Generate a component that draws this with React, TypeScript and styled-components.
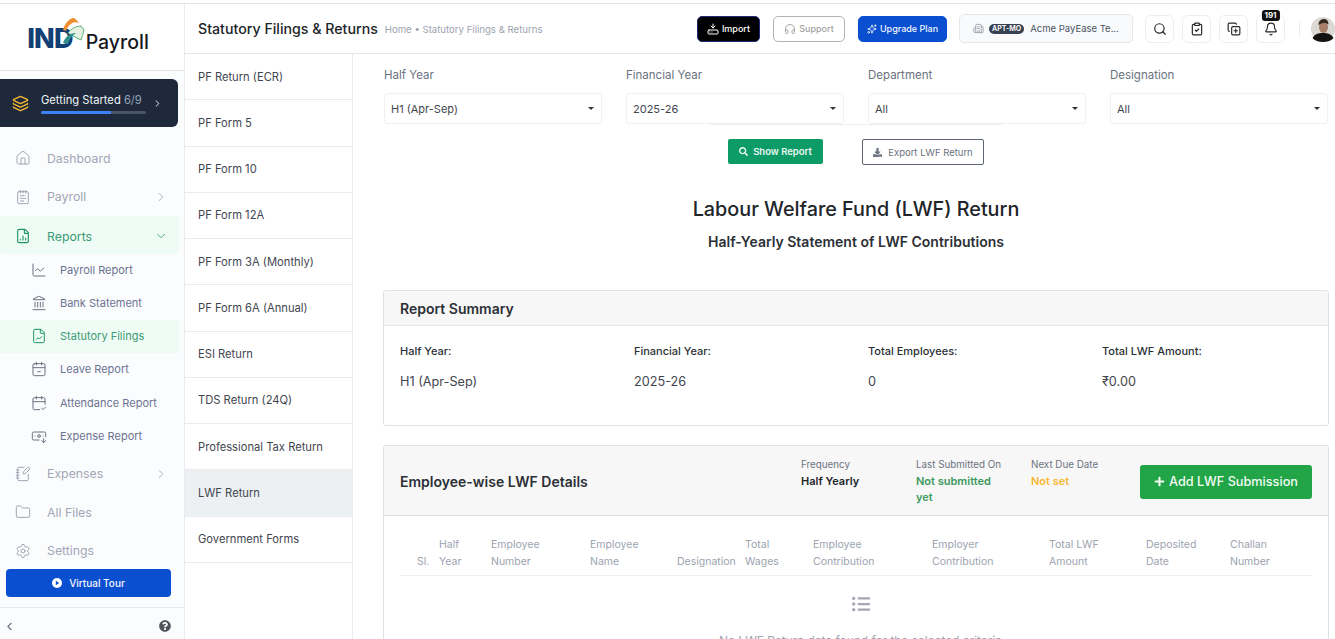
import styled, { createGlobalStyle } from 'styled-components';
import {
  BanknoteArrowDown,
  Bell,
  Building2,
  CalendarCheck2,
  CalendarMinus2,
  ChartLine,
  ChevronDown,
  ChevronLeft,
  ChevronRight,
  ClipboardCheck,
  CopyPlus,
  FileChartColumn,
  FileChartLine,
  Folder,
  Headphones,
  House,
  Landmark,
  Layers,
  NotebookPen,
  NotepadText,
  Search,
  Settings,
  Sparkles,
  HardDriveDownload,
} from 'lucide-react';
import { FaDownload, FaListUl, FaPlus, FaQuestionCircle, FaSearch } from 'react-icons/fa';

const GlobalStyle = createGlobalStyle`
  html, body {
    margin: 0;
    height: 100%;
    overflow: hidden;
    background: #fff;
    font-family: Inter, "Liberation Sans", sans-serif;
    color: #212529;
  }
  * { box-sizing: border-box; }
`;

const Page = styled.div`
  height: 100vh;
  padding-top: 3px;
  display: flex;
  flex-direction: column;
  overflow: hidden;
`;

const Shell = styled.div`
  flex: 1;
  min-height: 0;
  display: flex;
  border-top: 1px solid #e3e5e8;
`;

const Sidebar = styled.aside`
  width: 185px;
  flex: none;
  display: flex;
  flex-direction: column;
  background: #fbfcfe;
  border-right: 1px solid #e9ebee;
`;

const LogoBox = styled.div`
  height: 67px;
  flex: none;
  display: flex;
  align-items: center;
  justify-content: center;
  padding: 2px 8px 0 0;
  background: #fff;
  border-bottom: 1px solid #e5e7ea;
`;

const LogoMark = styled.span`
  font-size: 27px;
  line-height: 1;
  font-weight: 800;
  letter-spacing: -0.8px;
  color: #123f74;
`;

const LogoSwoosh = styled.svg`
  width: 26px;
  height: 28px;
  margin: -14px 0 0 -13px;
`;

const LogoWord = styled.span`
  font-size: 19.5px;
  line-height: 1;
  font-weight: 500;
  color: #15181d;
  margin: 9px 0 0 0;
`;

const StartedCard = styled.div`
  height: 48px;
  width: 178px;
  margin-top: 8px;
  flex: none;
  display: flex;
  align-items: center;
  padding: 0 15px 0 12px;
  border-radius: 0 6px 6px 0;
  background: #1e293b;
  color: #f1f5f9;
`;

const StartedBody = styled.div`
  width: 105px;
  margin: 0 auto 0 12px;
`;

const StartedText = styled.div`
  font-size: 11.2px;
  line-height: 15px;
  white-space: nowrap;
  span { color: #94a3b8; }
`;

const ProgressTrack = styled.div`
  height: 3px;
  margin-top: 3px;
  border-radius: 2px;
  background: #475569;
  overflow: hidden;
`;

const ProgressFill = styled.div`
  height: 100%;
  width: 67%;
  background: #3b82f6;
`;

const Nav = styled.nav`
  display: flex;
  flex-direction: column;
  margin-top: 12px;
  width: 179px;
`;

const NavItem = styled.div<{ $active?: boolean }>`
  height: 38.4px;
  display: flex;
  align-items: center;
  padding: ${(p) => (p.$active ? '3px' : '0')} 11px 0 15px;
  font-size: 12.3px;
  color: ${(p) => (p.$active ? '#3c9a72' : '#a2a7b5')};
  background: ${(p) => (p.$active ? '#effcf6' : 'transparent')};
  border-radius: 4px;
  svg { flex: none; }
  > svg:last-child:not(:first-child) { margin-left: auto; }
`;

const NavLabel = styled.span`
  margin-left: 16px;
`;

const SubNav = styled.div`
  display: flex;
  flex-direction: column;
  margin: -1px 0 2.5px;
`;

const SubItem = styled.div<{ $active?: boolean }>`
  height: 33.2px;
  display: flex;
  align-items: center;
  padding-left: 31px;
  font-size: 11px;
  color: ${(p) => (p.$active ? '#3c9a72' : '#6b7390')};
  background: ${(p) => (p.$active ? '#effcf6' : 'transparent')};
  svg { flex: none; color: ${(p) => (p.$active ? '#1f9266' : '#6b7280')}; }
`;

const SubLabel = styled.span`
  margin-left: 13px;
`;

const TourButton = styled.div`
  width: 165px;
  height: 28px;
  flex: none;
  margin: -1px 0 0 6px;
  display: flex;
  align-items: center;
  justify-content: center;
  gap: 7px;
  border-radius: 4px;
  background: #0b4fd1;
  color: #f4f7ff;
  font-size: 10px;
  font-weight: 500;
`;

const TourIcon = styled.svg`
  width: 10px;
  height: 10px;
`;

const SideFooter = styled.div`
  margin-top: 10px;
  height: 32px;
  flex: none;
  display: flex;
  align-items: center;
  justify-content: space-between;
  padding: 6px 13px 0 3px;
  border-top: 1px solid #e5e7ea;
  color: #6b7280;
`;

const Main = styled.div`
  flex: 1;
  min-width: 0;
  display: flex;
  flex-direction: column;
`;

const Header = styled.header`
  height: 50px;
  flex: none;
  display: flex;
  align-items: center;
  padding: 0 0 0 13px;
  border-bottom: 1px solid #e5e7ea;
`;

const PageTitle = styled.h1`
  margin: 0;
  font-size: 14.2px;
  font-weight: 500;
  color: #212529;
  white-space: nowrap;
`;

const Crumbs = styled.div`
  margin: 2px auto 0 7px;
  font-size: 9.6px;
  color: #9ca3af;
  white-space: nowrap;
`;

const HeaderButton = styled.div<{ $bg: string; $fg: string; $line: string; $w: number; $gap: number }>`
  width: ${(p) => p.$w}px;
  height: 26px;
  margin-right: ${(p) => p.$gap}px;
  flex: none;
  display: flex;
  align-items: center;
  justify-content: center;
  gap: 3px;
  border-radius: 5px;
  font-size: 9px;
  font-weight: 500;
  background: ${(p) => p.$bg};
  color: ${(p) => p.$fg};
  border: 1px solid ${(p) => p.$line};
`;

const CompanyBox = styled.div`
  width: 174px;
  height: 29px;
  margin-right: 12px;
  flex: none;
  display: flex;
  align-items: center;
  padding-left: 13px;
  gap: 4px;
  border: 1px solid #e5e7eb;
  border-radius: 5px;
  background: #f9fafb;
  font-size: 9.5px;
  color: #4b5563;
  white-space: nowrap;
`;

const CompanyTag = styled.span`
  padding: 0 3px;
  margin: 0 2px 0 1px;
  border-radius: 6px;
  background: #374151;
  color: #f3f4f6;
  font-size: 7px;
  line-height: 10px;
  font-weight: 700;
`;

const IconButton = styled.div`
  position: relative;
  width: 29px;
  height: 28px;
  margin-right: 8px;
  flex: none;
  display: flex;
  align-items: center;
  justify-content: center;
  border: 1px solid #eceef0;
  border-radius: 6px;
  color: #27272a;
`;

const CountBadge = styled.span`
  position: absolute;
  top: -6px;
  left: 50%;
  transform: translateX(-50%);
  padding: 0 3px;
  border-radius: 3px;
  background: #111;
  color: #fff;
  font-size: 8px;
  line-height: 11px;
  font-weight: 700;
`;

const Divider = styled.span`
  width: 1px;
  height: 16px;
  background: #eceef0;
  margin: 0 11px 0 6px;
  flex: none;
`;

const Avatar = styled.svg`
  width: 24px;
  height: 26px;
  flex: none;
`;

const Columns = styled.div`
  flex: 1;
  min-height: 0;
  display: flex;
`;

const ReportList = styled.div`
  width: 168px;
  flex: none;
  align-self: stretch;
  background: #fff;
  border-right: 1px solid #e9ebee;
`;

const ReportListItem = styled.div<{ $active?: boolean }>`
  height: 46.25px;
  display: flex;
  align-items: center;
  padding-left: 13px;
  font-size: 11.2px;
  color: #3f4650;
  background: ${(p) => (p.$active ? '#edf0f3' : '#fff')};
  border-bottom: 1px solid #e9ebee;
`;

const Content = styled.main`
  flex: 1;
  min-width: 0;
  padding: 13px 6px 0 30px;
`;

const Filters = styled.div`
  position: relative;
  display: grid;
  grid-template-columns: repeat(4, 218px);
  gap: 24px;
  margin-left: 1px;

  &::after {
    content: '';
    position: absolute;
    left: 325px;
    bottom: -1px;
    width: 294px;
    height: 1px;
    background: #eceef0;
  }
`;

const Field = styled.div`
  display: flex;
  flex-direction: column;
`;

const FieldLabel = styled.label`
  font-size: 11.5px;
  line-height: 16px;
  color: #6b7280;
  margin-bottom: 10px;
`;

const FieldSelect = styled.div`
  height: 31px;
  display: flex;
  align-items: center;
  justify-content: space-between;
  padding: 0 7px 0 6px;
  font-size: 11px;
  color: #3f4650;
  background: #fff;
  border: 1px solid #eff1f3;
  border-radius: 3px;
`;

const Caret = styled.span`
  width: 0;
  height: 0;
  border-left: 3px solid transparent;
  border-right: 3px solid transparent;
  border-top: 3px solid #333;
`;

const Actions = styled.div`
  display: flex;
  align-items: flex-start;
  margin: 15px 0 0 345px;
  gap: 39px;
`;

const ShowButton = styled.div`
  width: 95px;
  height: 25px;
  display: flex;
  align-items: center;
  justify-content: center;
  gap: 5px;
  border-radius: 2px;
  background: #0d9b68;
  color: #eafaf3;
  font-size: 9.5px;
  font-weight: 600;
`;

const ExportButton = styled.div`
  width: 122px;
  height: 26px;
  display: flex;
  align-items: center;
  justify-content: center;
  gap: 6px;
  border: 1px solid #5c6470;
  border-radius: 2px;
  color: #6b7280;
  font-size: 9.5px;
`;

const ReportHeading = styled.div`
  margin-top: 31px;
  width: 946px;
  text-align: center;
`;

const ReportTitle = styled.h2`
  margin: 0;
  font-size: 19.8px;
  line-height: 26px;
  font-weight: 500;
  color: #212529;
`;

const ReportSubtitle = styled.h3`
  margin: 11px 0 0;
  font-size: 14px;
  line-height: 18px;
  font-weight: 600;
  color: #2b3036;
`;

const Card = styled.section<{ $top: number; $h?: number }>`
  width: 946px;
  margin-top: ${(p) => p.$top}px;
  ${(p) => (p.$h ? `height: ${p.$h}px;` : '')}
  border: 1px solid #dfe1e4;
  border-radius: 3px;
  background: #fff;
`;

const CardHead = styled.div`
  height: 35px;
  display: flex;
  align-items: center;
  padding-left: 16px;
  background: #f7f7f7;
  border-bottom: 1px solid #e4e5e7;
  font-size: 14px;
  font-weight: 600;
  color: #2b3036;
`;

const SummaryGrid = styled.div`
  display: grid;
  grid-template-columns: repeat(4, 234px);
  padding: 17px 0 0 16px;
`;

const SummaryLabel = styled.div`
  font-size: 11px;
  line-height: 16px;
  font-weight: 500;
  color: #2b3036;
`;

const SummaryValue = styled.div`
  margin-top: 15px;
  font-size: 12.7px;
  line-height: 16px;
  color: #3f4650;
`;

const DetailHead = styled.div`
  height: 70px;
  display: flex;
  padding-left: 16px;
  background: #f7f7f7;
  border-bottom: 1px solid #dfe1e4;
`;

const DetailTitle = styled.div`
  width: 401px;
  align-self: center;
  padding-top: 2px;
  font-size: 14px;
  font-weight: 600;
  color: #2b3036;
`;

const Meta = styled.div<{ $w: number }>`
  width: ${(p) => p.$w}px;
  padding-top: 12px;
`;

const MetaLabel = styled.div`
  font-size: 9.8px;
  line-height: 13px;
  color: #6b7280;
`;

const MetaValue = styled.div<{ $color: string }>`
  margin-top: 2px;
  font-size: 11px;
  line-height: 16px;
  font-weight: 600;
  color: ${(p) => p.$color};
`;

const AddButton = styled.div`
  width: 172px;
  height: 34px;
  align-self: center;
  margin: 2px 0 0 -1px;
  display: flex;
  align-items: center;
  justify-content: center;
  gap: 4px;
  border-radius: 3px;
  background: #22a547;
  color: #f2fbf4;
  font-size: 12.7px;
  font-weight: 500;
`;

const TableHead = styled.div`
  margin: 20px 16px 0;
  height: 40px;
  display: grid;
  grid-template-columns: 39px 52px 99px 87px 68px 68px 119px 117px 97px 84px 82px;
  align-items: end;
  padding-bottom: 6px;
  border-bottom: 1px solid #eff0f2;
`;

const HeadCell = styled.div<{ $pad?: number }>`
  padding-left: ${(p) => p.$pad ?? 0}px;
  font-size: 10.5px;
  line-height: 17px;
  color: #9ca3af;
  white-space: pre-line;
`;

const EmptyState = styled.div`
  display: flex;
  flex-direction: column;
  align-items: center;
  padding: 19px 0 0 9px;
  color: #a4a8b4;
  font-size: 11.9px;
`;

const EmptyText = styled.div`
  margin-top: 20px;
  color: #9ca3af;
`;

const navTop = [
  { label: 'Dashboard', icon: House },
  { label: 'Payroll', icon: NotepadText, arrow: true },
];

const subItems = [
  { label: 'Payroll Report', icon: ChartLine },
  { label: 'Bank Statement', icon: Landmark },
  { label: 'Statutory Filings', icon: FileChartLine, active: true },
  { label: 'Leave Report', icon: CalendarMinus2 },
  { label: 'Attendance Report', icon: CalendarCheck2 },
  { label: 'Expense Report', icon: BanknoteArrowDown },
];

const navBottom = [
  { label: 'Expenses', icon: NotebookPen, arrow: true },
  { label: 'All Files', icon: Folder },
  { label: 'Settings', icon: Settings },
];

const reports = [
  'PF Return (ECR)',
  'PF Form 5',
  'PF Form 10',
  'PF Form 12A',
  'PF Form 3A (Monthly)',
  'PF Form 6A (Annual)',
  'ESI Return',
  'TDS Return (24Q)',
  'Professional Tax Return',
  'LWF Return',
  'Government Forms',
];

const filters = [
  { label: 'Half Year', value: 'H1 (Apr-Sep)' },
  { label: 'Financial Year', value: '2025-26' },
  { label: 'Department', value: 'All' },
  { label: 'Designation', value: 'All' },
];

const summary = [
  { label: 'Half Year:', value: 'H1 (Apr-Sep)' },
  { label: 'Financial Year:', value: '2025-26' },
  { label: 'Total Employees:', value: '0' },
  { label: 'Total LWF Amount:', value: '₹0.00' },
];

const columns = [
  'Sl.',
  'Half\nYear',
  'Employee\nNumber',
  'Employee\nName',
  'Designation',
  'Total\nWages',
  'Employee\nContribution',
  'Employer\nContribution',
  'Total LWF\nAmount',
  'Deposited\nDate',
  'Challan\nNumber',
];

const App: React.FC = () => {
  return (
    <Page>
      <GlobalStyle />
      <Shell>
        <Sidebar>
          <LogoBox>
            <LogoMark>IND</LogoMark>
            <LogoSwoosh viewBox="0 0 26 28" fill="none">
              <path d="M3 13C5 6 9 2 13 1c2 0 4 2 6 5-3-1-6-1-8 1-2 1-4 4-5 7z" fill="#ee8f2f" />
              <path d="M8 16c3-4 8-7 13-7l3 4c-1 4-2 7-3 10-4-2-8-4-13-7z" fill="#e3f0e2" stroke="#5aae74" />
              <path d="M3 26c2-6 7-10 13-10-4 3-7 6-8 11z" fill="#2f8f8b" />
            </LogoSwoosh>
            <LogoWord>Payroll</LogoWord>
          </LogoBox>
          <StartedCard>
            <Layers size={17} color="#f5b731" />
            <StartedBody>
              <StartedText>
                Getting Started <span>6/9</span>
              </StartedText>
              <ProgressTrack>
                <ProgressFill />
              </ProgressTrack>
            </StartedBody>
            <ChevronRight size={11} />
          </StartedCard>
          <Nav>
            {navTop.map((item) => (
              <NavItem key={item.label}>
                <item.icon size={16} strokeWidth={1.5} />
                <NavLabel>{item.label}</NavLabel>
                {item.arrow && <ChevronRight size={14} strokeWidth={1.5} />}
              </NavItem>
            ))}
            <NavItem $active>
              <FileChartColumn size={16} strokeWidth={1.7} color="#1f9266" />
              <NavLabel>Reports</NavLabel>
              <ChevronDown size={14} strokeWidth={1.5} />
            </NavItem>
            <SubNav>
              {subItems.map((item) => (
                <SubItem key={item.label} $active={item.active}>
                  <item.icon size={16} strokeWidth={1.5} />
                  <SubLabel>{item.label}</SubLabel>
                </SubItem>
              ))}
            </SubNav>
            {navBottom.map((item) => (
              <NavItem key={item.label}>
                <item.icon size={16} strokeWidth={1.5} />
                <NavLabel>{item.label}</NavLabel>
                {item.arrow && <ChevronRight size={14} strokeWidth={1.5} />}
              </NavItem>
            ))}
          </Nav>
          <TourButton>
            <TourIcon viewBox="0 0 10 10">
              <circle cx="5" cy="5" r="5" fill="#fff" />
              <path d="M3.8 2.7 7.2 5 3.8 7.3z" fill="#0b4fd1" />
            </TourIcon>
            Virtual Tour
          </TourButton>
          <SideFooter>
            <ChevronLeft size={13} />
            <FaQuestionCircle size={12} color="#52525b" />
          </SideFooter>
        </Sidebar>
        <Main>
          <Header>
            <PageTitle>Statutory Filings &amp; Returns</PageTitle>
            <Crumbs>Home • Statutory Filings &amp; Returns</Crumbs>
            <HeaderButton $w={63} $gap={13} $bg="#000" $fg="#fff" $line="#1e2a78">
              <HardDriveDownload size={12} />
              Import
            </HeaderButton>
            <HeaderButton $w={72} $gap={13} $bg="#fff" $fg="#a3a3a3" $line="#b4b4b4">
              <Headphones size={12} />
              Support
            </HeaderButton>
            <HeaderButton $w={89} $gap={12} $bg="#0b4fd1" $fg="#f2f6ff" $line="#0b4fd1">
              <Sparkles size={10} />
              Upgrade Plan
            </HeaderButton>
            <CompanyBox>
              <Building2 size={11} color="#9ca3af" />
              <CompanyTag>APT-MO</CompanyTag>
              Acme PayEase Te...
            </CompanyBox>
            <IconButton>
              <Search size={14} />
            </IconButton>
            <IconButton>
              <ClipboardCheck size={14} />
            </IconButton>
            <IconButton>
              <CopyPlus size={14} />
            </IconButton>
            <IconButton>
              <CountBadge>191</CountBadge>
              <Bell size={14} />
            </IconButton>
            <Divider />
            <Avatar viewBox="0 0 24 26">
              <circle cx="12" cy="13" r="12" fill="#dcd8d4" />
              <path d="M1.5 22c2-4 6-5 10.5-5s8.5 1 10.5 5c-2 2.5-6 4-10.5 4S3.500 24.500 1.500 22z" fill="#141312" />
              <ellipse cx="12.500" cy="11" rx="4.500" ry="6" fill="#a87f68" />
              <path d="M7.500 9c0-4 2.500-6 5.500-6s4.500 2 4.500 5.500c-2-2-6-2.500-10 .5z" fill="#33291f" />
            </Avatar>
          </Header>
          <Columns>
            <ReportList>
              {reports.map((name) => (
                <ReportListItem key={name} $active={name === 'LWF Return'}>
                  {name}
                </ReportListItem>
              ))}
            </ReportList>
            <Content>
              <Filters>
                {filters.map((f) => (
                  <Field key={f.label}>
                    <FieldLabel>{f.label}</FieldLabel>
                    <FieldSelect>
                      {f.value}
                      <Caret />
                    </FieldSelect>
                  </Field>
                ))}
              </Filters>
              <Actions>
                <ShowButton>
                  <FaSearch size={9} />
                  Show Report
                </ShowButton>
                <ExportButton>
                  <FaDownload size={9} />
                  Export LWF Return
                </ExportButton>
              </Actions>
              <ReportHeading>
                <ReportTitle>Labour Welfare Fund (LWF) Return</ReportTitle>
                <ReportSubtitle>Half-Yearly Statement of LWF Contributions</ReportSubtitle>
              </ReportHeading>
              <Card $top={39} $h={136}>
                <CardHead>Report Summary</CardHead>
                <SummaryGrid>
                  {summary.map((s) => (
                    <div key={s.label}>
                      <SummaryLabel>{s.label}</SummaryLabel>
                      <SummaryValue>{s.value}</SummaryValue>
                    </div>
                  ))}
                </SummaryGrid>
              </Card>
              <Card $top={19}>
                <DetailHead>
                  <DetailTitle>Employee-wise LWF Details</DetailTitle>
                  <Meta $w={115}>
                    <MetaLabel>Frequency</MetaLabel>
                    <MetaValue $color="#212529">Half Yearly</MetaValue>
                  </Meta>
                  <Meta $w={115}>
                    <MetaLabel>Last Submitted On</MetaLabel>
                    <MetaValue $color="#3d9a5f">
                      Not submitted
                      <br />
                      yet
                    </MetaValue>
                  </Meta>
                  <Meta $w={110}>
                    <MetaLabel>Next Due Date</MetaLabel>
                    <MetaValue $color="#f7b733">Not set</MetaValue>
                  </Meta>
                  <AddButton>
                    <FaPlus size={11} />
                    Add LWF Submission
                  </AddButton>
                </DetailHead>
                <TableHead>
                  {columns.map((c, i) => (
                    <HeadCell key={c} $pad={i === 0 ? 17 : 0}>
                      {c}
                    </HeadCell>
                  ))}
                </TableHead>
                <EmptyState>
                  <FaListUl size={18} />
                  <EmptyText>No LWF Return data found for the selected criteria</EmptyText>
                </EmptyState>
              </Card>
            </Content>
          </Columns>
        </Main>
      </Shell>
    </Page>
  );
};

export default App;
